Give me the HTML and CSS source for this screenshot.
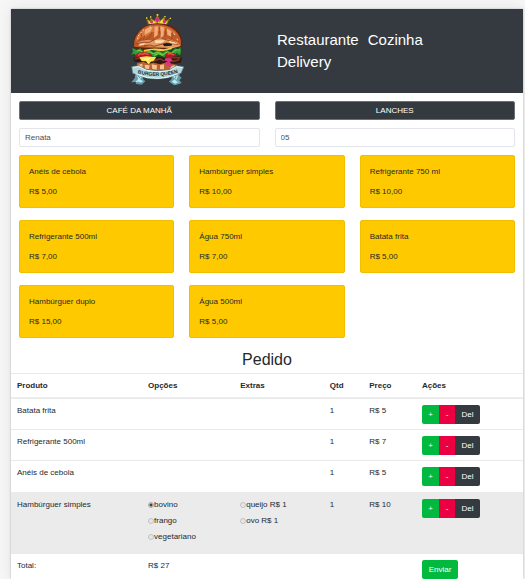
FILE: index.html
```html
<!DOCTYPE html>
<html lang="pt-BR">
<head>
<meta charset="utf-8">
<meta name="viewport" content="width=device-width, initial-scale=1">
<title>Burger Queen</title>
<link rel="stylesheet" href="styles.css">
</head>
<body>
<div class="app">
  <header class="header">
    <svg class="logo" viewBox="33 18 165 213" role="img" aria-label="Burger Queen">
      <path d="M86 50 82 31l11 7 1-11 12 11 9-20 9 19 13-13 2 14 14-7-9 21q-28-8-58-3z" fill="#b8962a" stroke="#594514" stroke-width="3"/>
      <path d="M91 45l-4-8 13 9 4-10 6 9 6-19 5 19 9-12 4 14 11-7-6 11q-25-6-48-2z" fill="#f0e04a"/>
      <path d="M115 24l6 12-6 12-6-12zM97 36l6 6-5 5-6-5zM136 35l6 6-6 6-5-6z" fill="#d52d87"/>
      <path d="M81 28h4v4h-4zM93 25h4v4h-4zM113 18h5v5h-5zM136 24h4v4h-4zM152 29h4v4h-4z" fill="#f2d94a"/>
      <path d="M43 119Q39 84 67 61q18-14 48-15 38 1 56 17 24 23 18 53-7 12-34 9l-83 2q-21 4-29-8z" fill="#5b2514"/>
      <path d="M45 116Q43 84 71 61q18-13 45-12 32 1 52 18 21 21 18 45-46 14-141 4z" fill="#c05a27"/>
      <path d="M50 99q5-22 26-35 21-13 48-10 35 4 50 28-28-15-53-13-20 0-35 13-15 13-36 17z" fill="#d77840"/>
      <path d="M78 65q9-9 23-8l-7 14-17 9zM107 56l10-1-1 26-11 8zM124 55l11 3-1 25-9 8zM144 62l12 7 1 17-12-5z" fill="#f0ad78"/>
      <path d="M66 73l2 12-8 13 17-14-6 16 22-12 6-16M121 56l2 23M141 61l-3 24M160 74l-2 20" fill="none" stroke="#a24a22" stroke-width="3"/>
      <path d="M54 105q21-14 49-7l19-7 23 2 30 9 10 12-24 7-78-6z" fill="#e39b62"/>
      <path d="M50 108q24-8 41-5l16-9M128 91l42 13M75 113l20-2 10 4 35-10 38 4" fill="none" stroke="#9b4826" stroke-width="3"/>
      <path d="M131 109l11-4 18 2-3 6-21 2z" fill="#211b1a"/>
      <path d="M107 97h31l-8 7-20 2zM149 98l18 5 9 5-22-2zM62 108l17-2-5 5-16 2z" fill="#ffdbad"/>
      <path d="M57 84l4-3M64 75l4-2M71 68l4-3M91 58l4-2M54 91l4-1M164 77l4 3M174 92l2 5" stroke="#ffe0ba" stroke-width="3"/>
      <path d="M42 118l18 9 36-5 38 4 45-8 9-2-2 15 2 18-10 8-15-3-9 5-15-4-16 5-12-5-16 8-13-7-17 6-12-12-15 3 9-12-12-3 10-7z" fill="#174f22"/>
      <path d="M40 120l13 6 10-5 12 10 15-7 13 10 15-8 12 9 14-9 11 8 14-13 7 6 8-10 2 13-3 12-10-7-11 10-14-7-12 9-17-8-13 9-12-10-12 8-16-9-10 10-10-10-10 3 6-8z" fill="#2f9e38"/>
      <path d="M53 129l10-2 11 9 16-5 13 6 15-4 14 7 13-8 13 3 15-10 9 2M62 141l13-3 12 4M106 142l13-5 12 6M151 143l14-5" fill="none" stroke="#7ed246" stroke-width="3"/>
      <path d="M74 126q27-8 61-2l27-7-5 7-27 6-33-4-22 5z" fill="#ffc93e"/>
      <path d="M49 142q8-12 33-9l15 5-1 9-31 3-15-3zM137 140q12-11 29-4l7 6-7 9-21 2z" fill="#ae1b20"/>
      <path d="M57 142l7-5 7 2 6-3 12 4M146 139l8-3 11 5" fill="none" stroke="#f2564a" stroke-width="4"/>
      <path d="M43 151l16-4 33 3 28-4 22 6 18-6 24-3 5 8-4 13-17 3-14-3-18 7-29-7-28 6-18-9-13 1z" fill="#32170f"/>
      <path d="M48 153l13-3 10 8 16-5 14 7 22-8 13 7M139 154l17-5 26-1-4 8-16 4-11-3" fill="none" stroke="#74382b" stroke-width="5"/>
      <path d="M61 148l21-3 30 3-8 10-9 3-6 10-8-11-13-1z" fill="#ffe34a"/>
      <path d="M68 150l28-1-10 10z" fill="#fff295"/>
      <path d="M54 165l20-4 13 7 16-4 19 5 17-5 19 4 16 2-2 22-113-1q-8-8-5-26z" fill="#bc6131"/>
      <path d="M58 170l12-3 1 15-11-1zM77 170l15 2-2 11-12-1zM98 169l16 3-1 13-13-2zM123 172l12-3v15h-12zM155 174l13-2-2 16-13-4z" fill="#f3c38f"/>
      <path d="M139 151l15-1 7 7-9 5 7 8-3 9-7-7-7-1-3-8 8-3-11-2z" fill="#dc357f"/>
      <path d="M49 197l25 5-2 11 7 7-11 10-16-2-3-6-12 1 10-12zM182 197l-22 5-3 12-7 7 16 11 12-3 10-4-7-8 7-8-7-5z" fill="#699ca9"/>
      <path d="M52 201l18 4-7 9 9 6-9 6-13-5 8-9zM178 202l-16 3 5 9-9 7 10 6 12-5-8-7z" fill="#b8edf0"/>
      <path d="M55 222l12 4M57 204l7 7M171 204l-4 9 10 9" fill="none" stroke="#3e7180" stroke-width="2"/>
      <path d="M38 176l22-3 23 12q32 7 69 0l20-12 23 3-9 20-18 6q-25 11-53 11-32 1-58-11l-16-6z" fill="#b3d5da" stroke="#507984" stroke-width="2"/>
      <path d="M42 178l17-2 23 11q32 8 70 1l21-12 17 3M52 198q32 15 65 13 32 0 60-14" fill="none" stroke="#e1fafa" stroke-width="3"/>
      <path id="ribbon" d="M53 195q63 18 127-1" fill="none"/>
      <text class="logo-text"><textPath href="#ribbon" startOffset="50%">BURGER QUEEN</textPath></text>
    </svg>
    <nav class="nav">
      <a href="#restaurante">Restaurante</a>
      <a href="#cozinha">Cozinha</a>
      <a href="#delivery">Delivery</a>
    </nav>
  </header>

  <main>
    <section class="controls">
      <button type="button" class="btn btn-dark menu-btn">CAFÉ DA MANHÃ</button>
      <button type="button" class="btn btn-dark menu-btn">LANCHES</button>
      <input class="field" type="text" aria-label="Cliente" value="Renata">
      <input class="field" type="text" aria-label="Mesa" value="05">
    </section>

    <section class="products">
      <button type="button" class="card"><span>Anéis de cebola</span><span>R$ 5,00</span></button>
      <button type="button" class="card"><span>Hambúrguer simples</span><span>R$ 10,00</span></button>
      <button type="button" class="card"><span>Refrigerante 750 ml</span><span>R$ 10,00</span></button>
      <button type="button" class="card"><span>Refrigerante 500ml</span><span>R$ 7,00</span></button>
      <button type="button" class="card"><span>Água 750ml</span><span>R$ 7,00</span></button>
      <button type="button" class="card"><span>Batata frita</span><span>R$ 5,00</span></button>
      <button type="button" class="card"><span>Hambúrguer duplo</span><span>R$ 15,00</span></button>
      <button type="button" class="card"><span>Água 500ml</span><span>R$ 5,00</span></button>
    </section>

    <h1 class="title">Pedido</h1>
    <table class="order">
      <colgroup>
        <col class="col-product"><col class="col-options"><col class="col-extras"><col class="col-qty"><col class="col-price"><col>
      </colgroup>
      <thead>
        <tr><th>Produto</th><th>Opções</th><th>Extras</th><th>Qtd</th><th>Preço</th><th>Ações</th></tr>
      </thead>
      <tbody>
        <tr>
          <td>Batata frita</td><td></td><td></td><td>1</td><td>R$ 5</td>
          <td><div class="group"><button type="button" class="btn btn-green">+</button><button type="button" class="btn btn-red">-</button><button type="button" class="btn btn-dark">Del</button></div></td>
        </tr>
        <tr>
          <td>Refrigerante 500ml</td><td></td><td></td><td>1</td><td>R$ 7</td>
          <td><div class="group"><button type="button" class="btn btn-green">+</button><button type="button" class="btn btn-red">-</button><button type="button" class="btn btn-dark">Del</button></div></td>
        </tr>
        <tr>
          <td>Anéis de cebola</td><td></td><td></td><td>1</td><td>R$ 5</td>
          <td><div class="group"><button type="button" class="btn btn-green">+</button><button type="button" class="btn btn-red">-</button><button type="button" class="btn btn-dark">Del</button></div></td>
        </tr>
        <tr class="active">
          <td>Hambúrguer simples</td>
          <td>
            <label class="option"><input type="radio" name="opcao" checked>bovino</label>
            <label class="option"><input type="radio" name="opcao">frango</label>
            <label class="option"><input type="radio" name="opcao">vegetariano</label>
          </td>
          <td>
            <label class="option"><input type="radio" name="extra">queijo R$ 1</label>
            <label class="option"><input type="radio" name="extra">ovo R$ 1</label>
          </td>
          <td>1</td><td>R$ 10</td>
          <td><div class="group"><button type="button" class="btn btn-green">+</button><button type="button" class="btn btn-red">-</button><button type="button" class="btn btn-dark">Del</button></div></td>
        </tr>
      </tbody>
      <tfoot>
        <tr><td>Total:</td><td>R$ 27</td><td></td><td></td><td></td><td><button type="button" class="btn btn-green send">Enviar</button></td></tr>
      </tfoot>
    </table>
  </main>
</div>
</body>
</html>
```
FILE: styles.css
```css
* {
  box-sizing: border-box;
}

body {
  margin: 0;
  padding: 9px 2px 0 11px;
  background: #f6f6f6;
  color: #24292e;
  font: 8px/12px "Liberation Sans", Arial, sans-serif;
}

button,
input {
  margin: 0;
  font: inherit;
}

.app {
  background: #fff;
  box-shadow: 0 0 2px rgba(0, 0, 0, 0.25), 0 0 14px rgba(0, 0, 0, 0.08);
}

.header {
  display: grid;
  grid-template-columns: 1fr 1fr;
  align-items: center;
  height: 84px;
  background: #343a40;
}

.logo {
  display: block;
  width: 55px;
  height: 71px;
  margin: 0 0 4px 36px;
  justify-self: center;
}

.logo-text {
  fill: #132e38;
  font: bold 15px "Liberation Sans", Arial, sans-serif;
  text-anchor: middle;
}

.nav {
  display: flex;
  flex-wrap: wrap;
  column-gap: 9px;
  padding: 0 48px 0 10px;
  font-size: 15px;
  line-height: 22px;
}

.nav a {
  color: #fff;
  text-decoration: none;
}

.controls {
  display: grid;
  grid-template-columns: 1fr 1fr;
  gap: 8px 15px;
  padding: 8px 8px 8px 8px;
}

.btn {
  height: 19px;
  padding: 0;
  border: 0;
  border-radius: 2px;
  color: #fff;
  text-align: center;
}

.btn-dark {
  background: #343a40;
}

.btn-green {
  background: #00b93e;
}

.btn-red {
  background: #eb0042;
}

.menu-btn {
  border: 1px solid #6b7074;
}

.field {
  width: 100%;
  height: 19px;
  padding: 0 5px;
  border: 1px solid #e2e5e9;
  border-radius: 2px;
  background: #fff;
  color: #495057;
}

.products {
  display: grid;
  grid-template-columns: repeat(3, 1fr);
  gap: 12px 15px;
  padding: 0 8px;
}

.card {
  display: flex;
  flex-direction: column;
  gap: 8px;
  height: 53px;
  padding: 10px 9px;
  border: 1px solid #f0bf00;
  border-radius: 2px;
  background: #ffc900;
  color: #24292e;
  text-align: left;
}

.title {
  margin: 12px 0 4px;
  font-size: 16px;
  font-weight: 400;
  line-height: 19px;
  text-align: center;
}

.order {
  width: 100%;
  table-layout: fixed;
  border-spacing: 0;
}

.col-product {
  width: 25.6%;
}

.col-options {
  width: 18%;
}

.col-extras {
  width: 17.5%;
}

.col-qty {
  width: 7.7%;
}

.col-price {
  width: 10.3%;
}

th,
td {
  padding: 6px 0 5px 6px;
  border-top: 1px solid #e9e9e9;
  text-align: left;
  vertical-align: top;
}

th {
  border-bottom: 1px solid #eee;
}

.active td {
  padding-top: 7px;
  padding-bottom: 6px;
  border-color: #fff;
  background: #ebebeb;
}

tfoot td {
  padding-bottom: 0;
}

.group {
  display: grid;
  grid-template-columns: 17px 16px 25px;
}

.group .btn {
  border-radius: 0;
}

.group .btn:first-child {
  border-radius: 2px 0 0 2px;
}

.group .btn:last-child {
  border-radius: 0 2px 2px 0;
}

.option {
  display: flex;
  align-items: center;
  height: 12px;
  margin-bottom: 4px;
}

.option input {
  width: 6px;
  height: 6px;
  appearance: none;
  border: 1px solid #c2c2c2;
  border-radius: 50%;
  background: #e6e6e6;
}

.option input:checked {
  border-color: #aaa;
  background: radial-gradient(#444 1px, #ddd 2px);
}

.send {
  display: block;
  width: 36px;
}
```
